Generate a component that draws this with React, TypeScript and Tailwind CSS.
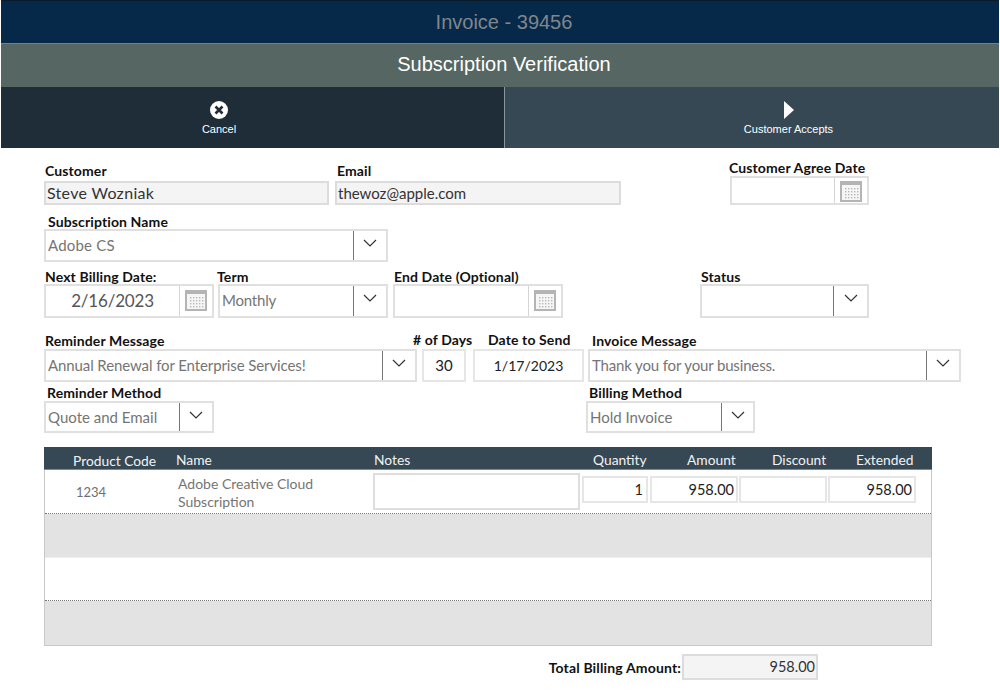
import type { ReactNode } from "react";

function Chevron() {
  return (
    <svg width="14" height="8" viewBox="0 0 14 8" fill="none" stroke="#333" strokeWidth="1.2">
      <polyline points="1,1 7,7 13,1" />
    </svg>
  );
}

function CalendarIcon() {
  return (
    <svg width="22" height="21" viewBox="0 0 22 21">
      <rect x="0" y="0" width="22" height="21" fill="#b4b4b4" />
      <rect x="2" y="4" width="18" height="15" fill="#f6f6f6" />
      {[7, 10, 13, 16].map((y) =>
        [5, 8, 11, 14, 17].map((x) => <rect key={`${x}-${y}`} x={x} y={y} width="1.4" height="1.4" fill="#b8b8b8" />),
      )}
    </svg>
  );
}

function Field({ label, labelClass, className = "", children }: { label: string; labelClass: string; className?: string; children: ReactNode }) {
  return (
    <div className={`flex flex-col ${className}`}>
      <div className={`h-4 text-[14px] tracking-[0.12px] leading-4 font-bold text-[#111] whitespace-nowrap ${labelClass}`}>{label}</div>
      {children}
    </div>
  );
}

function Select({ value, width, height, divider = "w-[33px]", textClass = "" }: { value?: string; width: string; height: string; divider?: string; textClass?: string }) {
  return (
    <div className={`flex border-2 border-[#e0e0e0] bg-white ${width} ${height}`}>
      <div className={`flex-1 pl-[2px] text-[15px] leading-[29px] text-[#757575] whitespace-nowrap overflow-hidden ${textClass}`}>{value}</div>
      <div className={`border-l border-[#777] flex justify-center pt-[8px] ${divider}`}>
        <div className="h-2">
          <Chevron />
        </div>
      </div>
    </div>
  );
}

function DateBox({ value, width, height, iconTop }: { value?: string; width: string; height: string; iconTop: string }) {
  return (
    <div className={`flex border-2 border-[#e0e0e0] bg-white ${width} ${height}`}>
      <div className="flex-1 text-center text-[17px] tracking-[-0.2px] leading-[29px] text-[#555]">{value}</div>
      <div className={`w-[33px] border-l border-[#d5d5d5] flex justify-center ${iconTop}`}>
        <CalendarIcon />
      </div>
    </div>
  );
}

function Box({ value, className }: { value?: string; className: string }) {
  return <div className={`border-2 ${className}`}>{value}</div>;
}

export default function App() {
  return (
    <div className="w-[1000px] h-[700px] bg-white overflow-hidden font-['Lato',sans-serif]">
      {/* Title bars */}
      <div className="mx-px h-[43px] pl-[8px] bg-[#06294a] border-t border-[#0a1a28] text-center text-[20px] leading-[42px] text-[#80868a] font-['Liberation_Sans',sans-serif]">
        Invoice - 39456
      </div>
      <div className="mx-px h-[44px] pl-[8px] bg-[#566662] border-t border-[#74837f] text-center text-[20px] leading-[41px] text-white font-['Liberation_Sans',sans-serif]">
        Subscription Verification
      </div>
      <div className="mx-px flex h-[61px] text-[11px] text-white font-['Liberation_Sans',sans-serif]">
        <div className="w-[503px] bg-[#1f2d38] flex flex-col items-center pt-[14px] pr-[67px]">
          <svg width="18" height="18" viewBox="0 0 18 18">
            <circle cx="9" cy="9" r="9" fill="#fff" />
            <path d="M5.5 5.5 L12.5 12.5 M12.5 5.5 L5.5 12.5" stroke="#1f2d38" strokeWidth="2.6" />
          </svg>
          <div className="mt-[3px] leading-[14px]">Cancel</div>
        </div>
        <div className="flex-1 border-l border-[#8a969d] bg-[#374855] flex flex-col items-center pt-[14px] pl-[73px]">
          <svg width="10" height="18" viewBox="0 0 10 18">
            <polygon points="0,0 10,9 0,18" fill="#fff" />
          </svg>
          <div className="mt-[3px] leading-[14px]">Customer Accepts</div>
        </div>
      </div>

      {/* Form */}
      <div className="pl-[44px] w-[1000px]">
        <div className="flex items-end h-[57px]">
          <Field label="Customer" labelClass="pl-px mb-[2px]">
            <Box value="Steve Wozniak" className="w-[285px] h-[24px] pl-[1px] text-[16px] tracking-[0.3px] leading-[20px] text-[#333] bg-[#f4f4f4] border-[#dcdcdc]" />
          </Field>
          <div className="ml-[6px]">
            <Field label="Email" labelClass="pl-[2px] mb-[2px]">
              <Box value="thewoz@apple.com" className="w-[286px] h-[24px] pl-[1px] text-[15px] leading-[20px] text-[#333] bg-[#f4f4f4] border-[#dcdcdc]" />
            </Field>
          </div>
          <div className="ml-[109px]">
            <Field label="Customer Agree Date" labelClass="-ml-px">
              <DateBox width="w-[139px]" height="h-[29px]" iconTop="pt-[3px]" />
            </Field>
          </div>
        </div>

        <div className="flex items-end mt-[9px]">
          <Field label="Subscription Name" labelClass="pl-[4px] -mb-px">
            <Select value="Adobe CS" width="w-[344px]" height="h-[33px]" textClass="tracking-[0.2px] leading-[27px]" />
          </Field>
        </div>

        <div className="flex items-end mt-[7px]">
          <Field label="Next Billing Date:" labelClass="pl-px -mb-px">
            <DateBox value="2/16/2023" width="w-[170px]" height="h-[34px]" iconTop="pt-[4px]" />
          </Field>
          <div className="ml-[4px]">
            <Field label="Term" labelClass="-ml-px -mb-px">
              <Select value="Monthly" width="w-[170px]" height="h-[34px]" textClass="tracking-[-0.2px] pl-[1px]" />
            </Field>
          </div>
          <div className="ml-[5px]">
            <Field label="End Date (Optional)" labelClass="pl-px -mb-px">
              <DateBox width="w-[170px]" height="h-[34px]" iconTop="pt-[4px]" />
            </Field>
          </div>
          <div className="ml-[137px]">
            <Field label="Status" labelClass="pl-px -mb-px">
              <Select width="w-[169px]" height="h-[34px]" divider="w-[34px]" />
            </Field>
          </div>
        </div>

        <div className="flex items-end mt-[14px]">
          <Field label="Reminder Message" labelClass="pl-px mb-0">
            <Select value="Annual Renewal for Enterprise Services!" width="w-[373px]" height="h-[33px]" textClass="tracking-[-0.1px]" />
          </Field>
          <div className="ml-[5px]">
            <Field label="# of Days" labelClass="-ml-[9px] mb-px" className="w-[44px]">
              <Box value="30" className="w-[44px] h-[33px] text-center text-[15px] leading-[29px] text-[#222] bg-white border-[#e6e6e6]" />
            </Field>
          </div>
          <div className="ml-[7px]">
            <Field label="Date to Send" labelClass="pl-[15px] mb-px" className="w-[111px]">
              <Box value="1/17/2023" className="w-[111px] h-[33px] text-center text-[14px] leading-[29px] text-[#222] bg-white border-[#e6e6e6]" />
            </Field>
          </div>
          <div className="ml-[4px]">
            <Field label="Invoice Message" labelClass="pl-[4px]">
              <Select value="Thank you for your business." width="w-[373px]" height="h-[33px]" textClass="tracking-[-0.15px] pl-[1px]" />
            </Field>
          </div>
        </div>

        <div className="flex items-end mt-[3px]">
          <Field label="Reminder Method" labelClass="pl-[3px]">
            <Select value="Quote and Email" width="w-[170px]" height="h-[32px]" textClass="leading-[27px]" />
          </Field>
          <div className="ml-[372px]">
            <Field label="Billing Method" labelClass="pl-[3px]">
              <Select value="Hold Invoice" width="w-[169px]" height="h-[32px]" divider="w-[32px]" textClass="leading-[27px]" />
            </Field>
          </div>
        </div>

        {/* Line items */}
        <div className="mt-[14px] w-[888px] h-[199px] border border-[#c8c8c8] border-t-0 flex flex-col">
          <div className="h-[23px] -mx-px bg-[#374855] flex text-[13.8px] leading-[26px] text-[#f2f2f2] border-b border-[#7c8a94]">
            <div className="w-[130px] pl-[29px] leading-[28px]">Product Code</div>
            <div className="w-[200px] pl-[2px]">Name</div>
            <div className="w-[219px]">Notes</div>
            <div className="w-[94px]">Quantity</div>
            <div className="w-[85px]">Amount</div>
            <div className="w-[84px]">Discount</div>
            <div>Extended</div>
          </div>
          <div className="h-[44px] flex items-start border-b border-dotted border-[#777] bg-white">
            <div className="w-[133px] pl-[31px] pt-[14px] text-[13px] leading-4 text-[#6f6f6f]">1234</div>
            <div className="w-[195px] pt-[5px] text-[14px] leading-[18px] text-[#757575]">
              Adobe Creative Cloud
              <br />
              Subscription
            </div>
            <Box className="mt-[3px] w-[207px] h-[37px] bg-white border-[#dedede]" />
            <div className="flex mt-[6px] ml-[2px] gap-[1px] text-right text-[14.5px] leading-[23px] text-[#222]">
              <Box value="1" className="w-[66px] h-[27px] pr-[3px] bg-white border-[#e6e6e6]" />
              <Box value="958.00" className="ml-px w-[88px] h-[27px] pr-[2px] bg-white border-[#e6e6e6]" />
              <Box className="w-[88px] h-[27px] bg-white border-[#e6e6e6]" />
              <Box value="958.00" className="w-[88px] h-[27px] pr-[2px] bg-white border-[#e6e6e6]" />
            </div>
          </div>
          <div className="h-[44px] bg-[#e3e3e3] border-b border-[#eeeeee]" />
          <div className="h-[43px] bg-white border-b border-dotted border-[#777]" />
          <div className="flex-1 bg-[#e3e3e3]" />
        </div>

        <div className="flex items-center mt-[8px] w-[774px] justify-end">
          <div className="text-[14px] tracking-[0.15px] font-bold text-[#111] mr-px">Total Billing Amount:</div>
          <Box value="958.00" className="w-[136px] h-[26px] text-right pr-[1px] text-[14.5px] leading-[21px] bg-[#f4f4f4] border-[#dcdcdc] text-[#333]" />
        </div>
      </div>
    </div>
  );
}
